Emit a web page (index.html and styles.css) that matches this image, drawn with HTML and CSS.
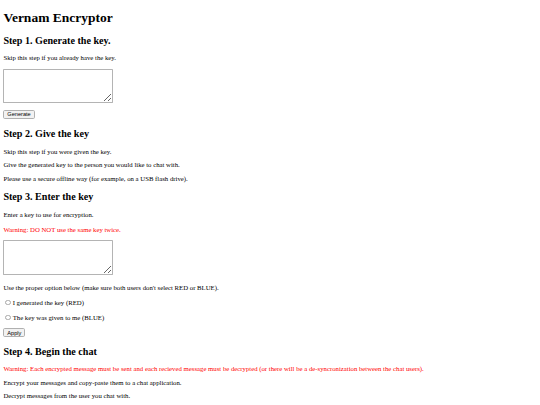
FILE: index.html
```html
<!DOCTYPE html>
<html lang="en">
<head>
<meta charset="utf-8">
<title>Vernam Encryptor</title>
<link rel="stylesheet" href="styles.css">
</head>
<body>
<h1 class="title">Vernam Encryptor</h1>
<h2 class="step">Step 1. Generate the key.</h2>
<p>Skip this step if you already have the key.</p>
<textarea class="key-box"></textarea>
<p class="action"><button class="btn">Generate</button></p>
<h2 class="step">Step 2. Give the key</h2>
<p>Skip this step if you were given the key.</p>
<p>Give the generated key to the person you would like to chat with.</p>
<p>Please use a secure offline way (for example, on a USB flash drive).</p>
<h2 class="step step-three">Step 3. Enter the key</h2>
<p>Enter a key to use for encryption.</p>
<p class="warning warn-key">Warning: DO NOT use the same key twice.</p>
<textarea class="key-box"></textarea>
<p class="after-box">Use the proper option below (make sure both users don't select RED or BLUE).</p>
<p class="radio-row"><label><input type="radio" name="side" class="radio">I generated the key (RED)</label></p>
<p class="radio-row"><label><input type="radio" name="side" class="radio">The key was given to me (BLUE)</label></p>
<p class="radio-row"><button class="btn">Apply</button></p>
<h2 class="step">Step 4. Begin the chat</h2>
<p class="warning">Warning: Each encrypted message must be sent and each recieved message must be decrypted (or there will be a de-syncronization between the chat users).</p>
<p>Encrypt your messages and copy-paste them to a chat application.</p>
<p>Decrypt messages from the user you chat with.</p>
</body>
</html>
```
FILE: styles.css
```css
html {
  zoom: 0.421875;
}
body {
  margin: 8px;
  font-family: "Liberation Serif", "DejaVu Serif", serif;
  font-size: 16px;
  color: #000;
  background: #fff;
}
.title,
.step {
  font-family: "Liberation Serif", "DejaVu Serif", serif;
  font-weight: bold;
}
.title {
  font-size: 32px;
  margin: 15px 0 21px;
}
.step {
  font-size: 24px;
  margin: 20px 0;
}
.step-three {
  margin-top: 22px;
}
.warning {
  color: #ff0000;
}
.warn-key {
  margin-top: 19px;
}
.key-box {
  width: 261px;
  height: 82px;
  margin-top: 2px;
  box-sizing: border-box;
  display: inline-block;
  vertical-align: bottom;
  border: 2px solid #b4b4b4;
  border-radius: 2px;
  background: #fff;
}
.action {
  margin-bottom: 22px;
}
.after-box {
  margin-top: 21px;
}
.radio-row {
  margin: 18px 0;
}
.btn {
  font-family: "Liberation Sans", Arial, sans-serif;
  font-size: 13.333px;
  padding: 1px 7px;
  border: 2px solid #b0b0b0;
  border-radius: 4px;
  background: #f2f2f2;
  color: #000;
}
.radio {
  -webkit-appearance: none;
  appearance: none;
  width: 13px;
  height: 13px;
  margin: 3px 4px 0 5px;
  border: 2px solid #a8a8a8;
  border-radius: 50%;
  background: #fff;
  vertical-align: -1px;
}
```
